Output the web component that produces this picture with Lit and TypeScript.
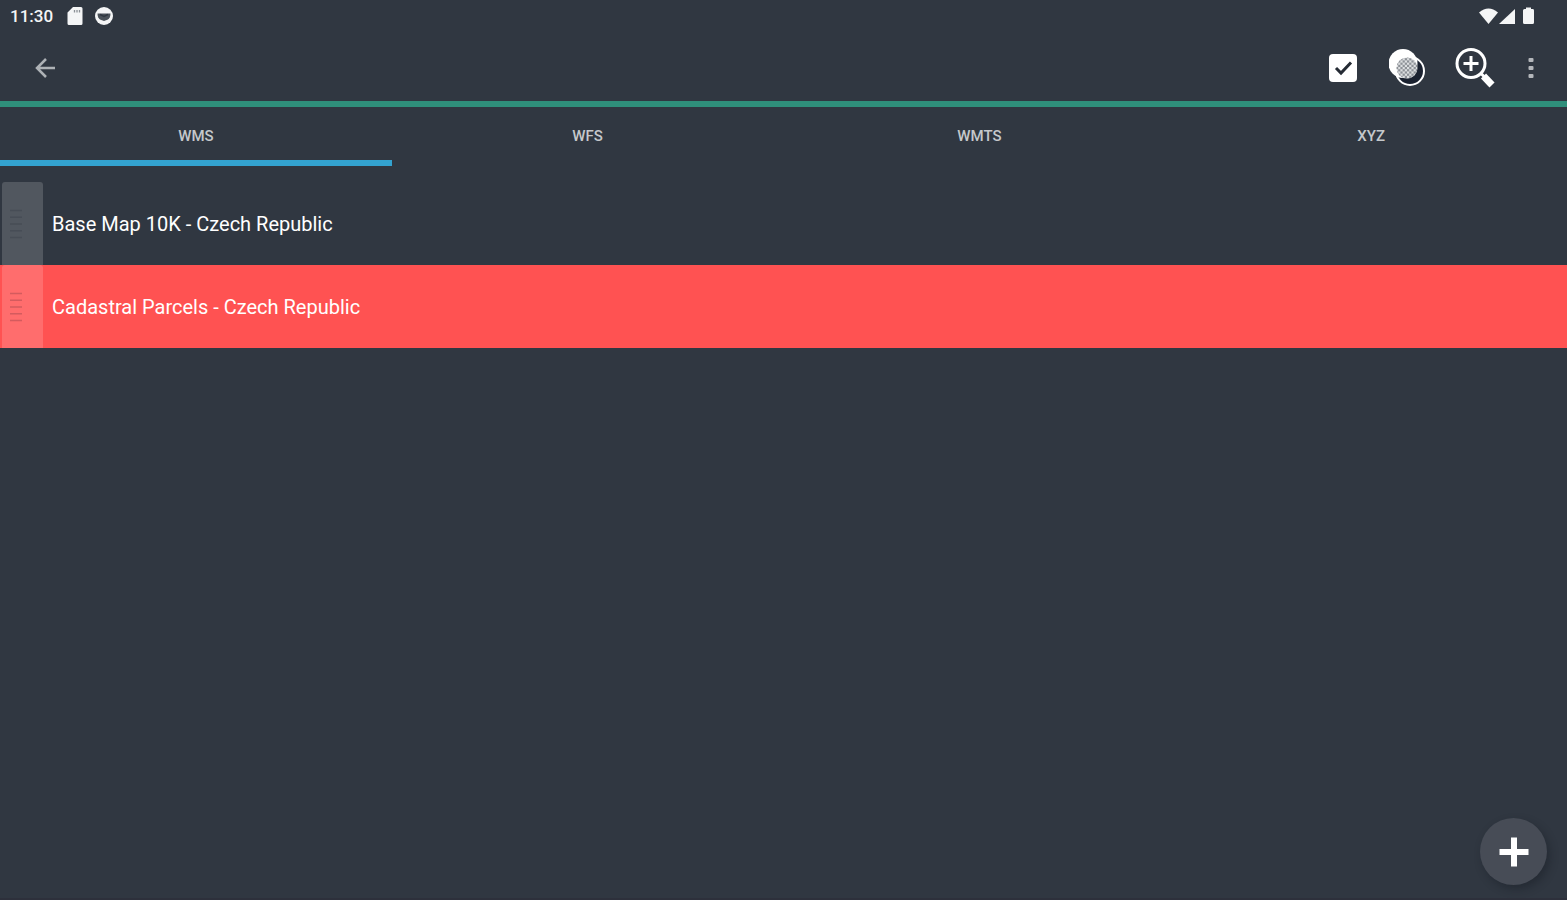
import { LitElement, html, css, svg } from "lit";
import { customElement, state } from "lit/decorators.js";
import { classMap } from "lit/directives/class-map.js";

interface Layer {
  name: string;
  handle: string;
  selected: boolean;
}

@customElement("status-bar")
class StatusBar extends LitElement {
  static styles = css`
    :host {
      display: flex;
      align-items: center;
      justify-content: space-between;
      height: 32px;
      padding: 0 32px 0 10px;
      color: #f4f5f6;
    }
    .side {
      display: flex;
      align-items: center;
    }
    .time {
      font-size: 17px;
      line-height: 20px;
      margin-right: 14px;
    }
    .sd {
      margin-right: 11px;
    }
    svg {
      display: block;
      fill: currentColor;
    }
  `;

  render() {
    return html`
      <div class="side">
        <span class="time">11:30</span>
        <svg class="sd" width="16" height="20" viewBox="0 0 16 20" aria-hidden="true">
          <path d="M6 1h8a1.500 1.500 0 0 1 1.500 1.500v15a1.500 1.500 0 0 1-1.500 1.500H2a1.500 1.500 0 0 1-1.500-1.500V6.500z" />
          <path d="M7.500 4v2.500M10 4v2.500M12.500 4v2.500" stroke="#8b9096" stroke-width="1.300" />
        </svg>
        <svg width="20" height="20" viewBox="0 0 20 20" aria-hidden="true">
          <circle cx="10" cy="10" r="9" />
          <path d="M3.500 7.500h13c0 3-1 5-2.500 6L10 15l-4-1.500c-1.500-1-2.500-3-2.500-6z" fill="#4a5159" />
          <path d="M6 8.500l4 2 4-2" fill="none" stroke="#303741" stroke-width="1.500" />
        </svg>
      </div>
      <div class="side">
        <svg width="57" height="20" viewBox="0 0 57 20" role="img" aria-label="Wi-Fi, signal and battery">
          <path d="M1 6.500Q10.500-1.500 20 6.500L10.500 18z" />
          <path d="M37 3v15H21z" />
          <path d="M46.500 3h1.500V1.500h5V3h1.500a1.500 1.500 0 0 1 1.500 1.500v12a1.500 1.500 0 0 1-1.500 1.500h-8a1.500 1.500 0 0 1-1.500-1.500v-12A1.500 1.500 0 0 1 46.500 3z" />
        </svg>
      </div>
    `;
  }
}

@customElement("layer-row")
class LayerRow extends LitElement {
  static properties = { layer: { attribute: false } };
  declare layer: Layer;

  static styles = css`
    :host {
      display: block;
    }
    .row {
      display: flex;
      align-items: stretch;
      height: 83px;
    }
    .selected {
      background: #ff5252;
    }
    .handle {
      display: flex;
      align-items: center;
      width: 41px;
      margin: 0 0 0 2px;
      padding: 0 0 0 7px;
      border: 0;
      border-radius: 3px 3px 0 0;
      background: rgba(255, 255, 255, 0.16);
      cursor: grab;
    }
    .name {
      flex: 1;
      border: 0;
      background: none;
      padding: 0 9px;
      font: 400 20px/24px Roboto, sans-serif;
      color: #fff;
      text-align: left;
    }
    svg {
      display: block;
    }
  `;

  render() {
    const { name, handle, selected } = this.layer;
    return html`
      <div class=${classMap({ row: true, selected })}>
        <button class="handle" aria-label="Reorder ${name}">
          <svg width="14" height="32" viewBox="0 0 14 32" stroke=${handle} stroke-width="1.500" aria-hidden="true">
            <path d="M1 2.500h12M1 9.250h12M1 16h12M1 22.750h12M1 29.500h12" />
          </svg>
        </button>
        <button class="name">${name}</button>
      </div>
    `;
  }
}

@customElement("app-root")
class AppRoot extends LitElement {
  @state() private active = "WMS";

  private tabs = ["WMS", "WFS", "WMTS", "XYZ"];

  private layers: Layer[] = [
    { name: "Base Map 10K - Czech Republic", handle: "#474d56", selected: false },
    { name: "Cadastral Parcels - Czech Republic", handle: "#d45b5e", selected: true },
  ];

  static styles = css`
    :host {
      display: flex;
      flex-direction: column;
      box-sizing: border-box;
      min-height: 100vh;
      background: #303741;
      border-bottom: 2px solid #2d303b;
      font-family: Roboto, sans-serif;
      font-weight: 500;
    }
    button {
      display: grid;
      place-items: center;
      padding: 0;
      border: 0;
      background: none;
      color: #fff;
      font-family: inherit;
      cursor: pointer;
    }
    svg {
      display: block;
    }
    .toolbar {
      display: flex;
      align-items: center;
      justify-content: space-between;
      height: 67px;
      padding: 2px 25px 0;
      border-bottom: 6px solid #2f8f7b;
    }
    .back {
      width: 40px;
      height: 48px;
    }
    .actions {
      display: flex;
      align-items: center;
      gap: 24px;
    }
    .action {
      width: 42px;
      height: 48px;
    }
    .more {
      width: 22px;
      height: 48px;
    }
    .tabs {
      display: grid;
      grid-template-columns: repeat(4, 1fr);
    }
    .tab {
      height: 59px;
      border-top: 5px solid transparent;
      border-bottom: 6px solid transparent;
      font-size: 15px;
      font-weight: 500;
      line-height: 20px;
      color: #c5c8cb;
    }
    .current {
      border-bottom-color: #33a3d0;
    }
    .list {
      margin: 0;
      padding: 16px 0 0;
      list-style: none;
    }
    .add {
      position: fixed;
      right: 20px;
      bottom: 15px;
      width: 67px;
      height: 67px;
      border-radius: 50%;
      background: #474c56;
      box-shadow: 3px 4px 8px rgba(20, 24, 32, 0.4);
    }
  `;

  private weave() {
    const cells = [];
    for (let r = 0; r < 11; r++) {
      for (let c = 0; c < 11; c++) {
        if ((r + c) % 2) {
          cells.push(svg`<rect x=${7 + c * 2.2} y=${8 + r * 2.2} width="2.200" height="2.200" />`);
        }
      }
    }
    return cells;
  }

  render() {
    return html`
      <status-bar></status-bar>
      <header class="toolbar">
        <button class="back" aria-label="Back">
          <svg width="24" height="24" viewBox="0 0 24 24" fill="none" stroke="#aeb2b6" stroke-width="2.500" aria-hidden="true">
            <path d="M22 12H4M13 3L4 12l9 9" />
          </svg>
        </button>
        <div class="actions">
          <button class="action" aria-label="Select all">
            <svg width="28" height="28" viewBox="0 0 28 28" aria-hidden="true">
              <rect width="28" height="28" rx="4" fill="#fff" />
              <path d="M7 14l5 5L22 8.500" fill="none" stroke="#252b34" stroke-width="3" />
            </svg>
          </button>
          <button class="action" aria-label="Transparency">
            <svg width="40" height="40" viewBox="0 0 40 40" aria-hidden="true">
              <defs>
                <clipPath id="overlap"><circle cx="18" cy="20" r="10.500" /></clipPath>
              </defs>
              <circle cx="21" cy="23" r="14" fill="#1b2230" stroke="#fff" stroke-width="2" />
              <circle cx="14" cy="15.500" r="14.500" fill="#fff" />
              <circle cx="18" cy="20" r="10.500" fill="#dcdee0" />
              <g clip-path="url(#overlap)" fill="#8d9197">${this.weave()}</g>
            </svg>
          </button>
          <button class="action" aria-label="Zoom in">
            <svg width="42" height="42" viewBox="0 0 42 42" fill="none" stroke="#fff" aria-hidden="true">
              <circle cx="17" cy="16.500" r="14" stroke-width="3" />
              <path d="M17 9v15M9.500 16.500h15" stroke-width="3" />
              <path d="M27 26.500l4 4" stroke-width="3" />
              <path d="M29.500 29L38 38" stroke-width="7" />
            </svg>
          </button>
          <button class="more" aria-label="More options">
            <svg width="6" height="22" viewBox="0 0 6 22" fill="#b4b7bb" aria-hidden="true">
              <rect x="0.500" y="1" width="5" height="4" rx="1" />
              <rect x="0.500" y="9" width="5" height="4" rx="1" />
              <rect x="0.500" y="17" width="5" height="4" rx="1" />
            </svg>
          </button>
        </div>
      </header>
      <nav class="tabs" role="tablist">
        ${this.tabs.map(
          (t) => html`<button
            role="tab"
            class=${classMap({ tab: true, current: t === this.active })}
            aria-selected=${t === this.active ? "true" : "false"}
            @click=${() => (this.active = t)}
          >${t}</button>`
        )}
      </nav>
      <ul class="list">
        ${this.layers.map((l) => html`<li><layer-row .layer=${l}></layer-row></li>`)}
      </ul>
      <button class="add" aria-label="Add source">
        <svg width="30" height="30" viewBox="0 0 30 30" stroke="#fff" stroke-width="6" aria-hidden="true">
          <path d="M15 0.500v29M0.500 15h29" />
        </svg>
      </button>
    `;
  }
}
